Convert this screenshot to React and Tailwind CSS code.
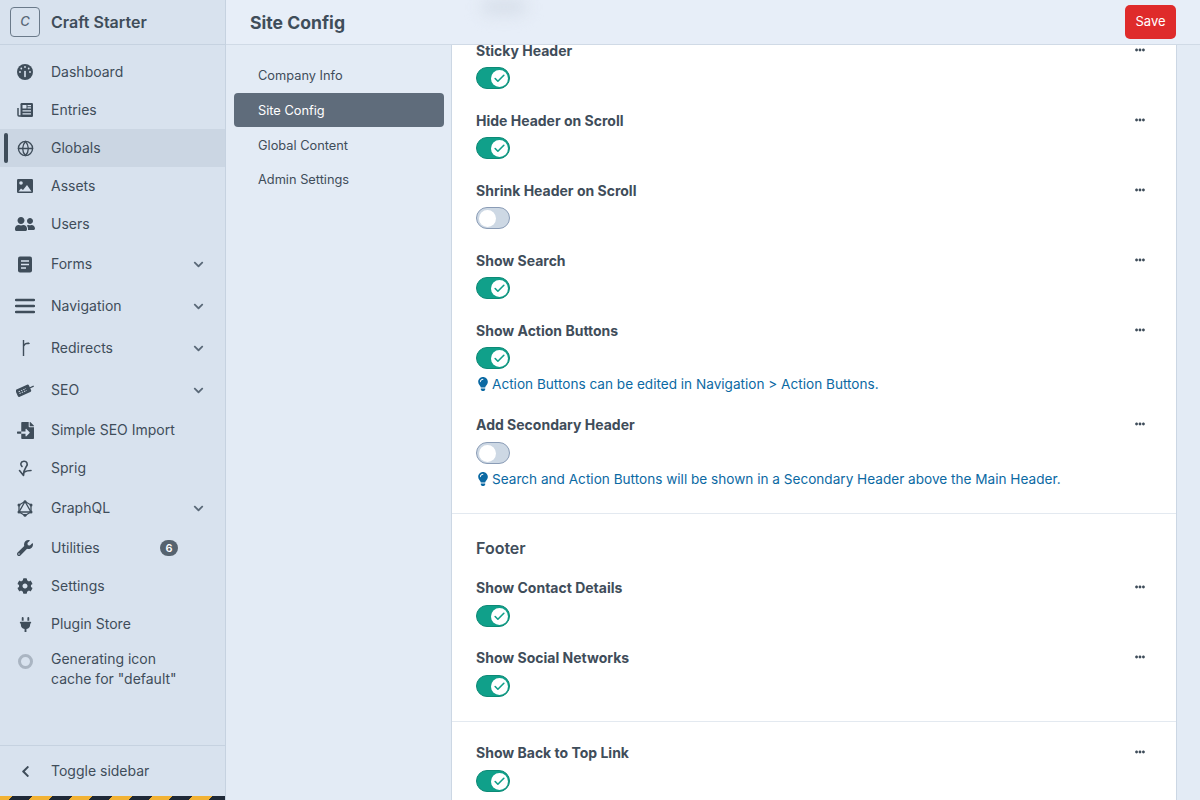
import React from 'react';
import {
  FaWrench,
  FaCog,
  FaPlug,
  FaFileImport,
  FaChevronDown,
  FaChevronLeft,
  FaLightbulb,
  FaEllipsisH,
  FaUserFriends,
} from 'react-icons/fa';
import { Globe, Check } from 'lucide-react';

const GaugeIcon = () => (
  <svg width="16" height="16" viewBox="0 0 16 16">
    <circle cx="8" cy="8" r="8" fill="currentColor" />
    <path d="M8 7.500v5" stroke="#d8e2ee" strokeWidth="1.600" strokeLinecap="round" />
    <circle cx="8" cy="3" r="0.900" fill="#d8e2ee" />
    <circle cx="4.300" cy="4.500" r="0.900" fill="#d8e2ee" />
    <circle cx="11.700" cy="4.500" r="0.900" fill="#d8e2ee" />
    <circle cx="3" cy="8" r="0.900" fill="#d8e2ee" />
    <circle cx="13" cy="8" r="0.900" fill="#d8e2ee" />
  </svg>
);

const NewsIcon = () => (
  <svg width="16" height="14" viewBox="0 0 16 14">
    <path d="M1 5v7a1 1 0 0 0 1 1h2" fill="none" stroke="currentColor" strokeWidth="1.500" />
    <rect x="3.500" y="0" width="12.500" height="14" rx="1.200" fill="currentColor" />
    <rect x="5.500" y="2" width="4" height="3.500" fill="#d8e2ee" />
    <path d="M10.500 2.700h3.500M10.500 4.800h3.500M5.500 7.800h8.500M5.500 10.800h8.500" stroke="#d8e2ee" strokeWidth="1.200" />
  </svg>
);

const ImageIcon = () => (
  <svg width="16" height="14" viewBox="0 0 16 14">
    <rect width="16" height="14" rx="1.200" fill="currentColor" />
    <circle cx="4" cy="4" r="1.800" fill="#d8e2ee" />
    <path d="M1.500 12.500 4 9.500l2 1.500L10 6l4.500 6.500z" fill="#d8e2ee" />
  </svg>
);

const FormsIcon = () => (
  <svg width="16" height="17" viewBox="0 0 16 17">
    <rect x="1" y="0.500" width="14" height="16" rx="2" fill="currentColor" />
    <path d="M4 5h8M4 8.500h8M4 12h5" stroke="#d8e2ee" strokeWidth="1.600" />
  </svg>
);

const NavIcon = () => (
  <svg width="20" height="16" viewBox="0 0 20 16">
    <path d="M1 2h18M1 8h18M1 14h18" stroke="currentColor" strokeWidth="2.400" strokeLinecap="round" />
  </svg>
);

const RedirectIcon = () => (
  <svg width="16" height="16" viewBox="0 0 16 16" fill="none">
    <path d="M6.500 0v16" stroke="currentColor" strokeWidth="1.400" />
    <path d="M6.500 6 C7.500 4 9 3.300 11 3.300" stroke="currentColor" strokeWidth="1.400" />
    <path d="M11.500 2l-1 2.500 2.500-.8z" fill="currentColor" />
  </svg>
);

const TagIcon = () => (
  <svg width="18" height="14" viewBox="0 0 18 14">
    <g transform="rotate(-24 9 7)">
      <rect x="0" y="3" width="14.500" height="8" rx="1.500" fill="currentColor" />
      <path d="M14 7h4.500" stroke="currentColor" strokeWidth="1.200" />
      <path d="M2.500 6h8M2.500 8h8" stroke="#d8e2ee" strokeWidth="0.900" strokeDasharray="1.500 1" />
    </g>
  </svg>
);

const SprigIcon = () => (
  <svg width="16" height="17" viewBox="0 0 16 17" fill="none">
    <path
      d="M5 6.500 C3 5 3.500 1.500 6.800 1.300 C10 1.100 11 4 9.500 6.200 C8.300 8 6.500 10 6.500 15.500 M2.500 10.500 L6.500 15.500 M7.300 12 C9 11 11.500 10.500 14 10.500"
      stroke="currentColor"
      strokeWidth="1.600"
      strokeLinecap="round"
    />
  </svg>
);

const GraphqlIcon = () => (
  <svg width="16" height="17" viewBox="0 0 16 17" fill="none" stroke="currentColor" strokeWidth="1.300">
    <path d="M8 1.500 14 5v7l-6 3.500L2 12V5z" />
    <path d="M8 1.500 14 12H2z" />
    <g fill="currentColor" stroke="none">
      <circle cx="8" cy="1.800" r="1.500" />
      <circle cx="14" cy="5" r="1.500" />
      <circle cx="14" cy="12" r="1.500" />
      <circle cx="8" cy="15.200" r="1.500" />
      <circle cx="2" cy="12" r="1.500" />
      <circle cx="2" cy="5" r="1.500" />
    </g>
  </svg>
);

const navItems = [
  { label: 'Dashboard', icon: <GaugeIcon /> },
  { label: 'Entries', icon: <NewsIcon /> },
  { label: 'Globals', icon: <Globe size={17} strokeWidth={1.900} />, active: true },
  { label: 'Assets', icon: <ImageIcon /> },
  { label: 'Users', icon: <FaUserFriends size={20} /> },
  { label: 'Forms', icon: <FormsIcon />, sub: true },
  { label: 'Navigation', icon: <NavIcon />, sub: true },
  { label: 'Redirects', icon: <RedirectIcon />, sub: true },
  { label: 'SEO', icon: <TagIcon />, sub: true },
  { label: 'Simple SEO Import', icon: <FaFileImport size={17} /> },
  { label: 'Sprig', icon: <SprigIcon /> },
  { label: 'GraphQL', icon: <GraphqlIcon />, sub: true },
  { label: 'Utilities', icon: <FaWrench size={16} />, badge: 6 },
  { label: 'Settings', icon: <FaCog size={16} /> },
  { label: 'Plugin Store', icon: <FaPlug size={15} /> },
];

const Sidebar = () => (
  <aside className="w-[226px] h-full shrink-0 flex flex-col bg-[#d8e2ee] border-r border-[#c6d2e0] text-[#3f4d5a]">
    <div className="h-[45px] shrink-0 flex items-center pl-[10px] border-b border-[#c6d2e0]">
      <div className="w-[30px] h-[30px] flex items-center justify-center border border-[#6b7a8a] rounded text-[13px] font-medium italic text-[#5a6978]">
        C
      </div>
      <span className="ml-[11px] text-base font-semibold">Craft Starter</span>
    </div>
    <nav className="flex-1 pt-2">
      {navItems.map((item) => (
        <div
          key={item.label}
          className={`relative flex items-center ${item.sub ? 'h-[42px]' : 'h-[38px]'} ${item.active ? 'bg-[#cbd6e3]' : ''}`}
        >
          {item.active && <span className="absolute left-1 top-1 bottom-1 w-1 rounded bg-[#3f4d5a]" />}
          <span className="w-[50px] shrink-0 flex justify-center">{item.icon}</span>
          <span className="ml-[1px] text-sm">{item.label}</span>
          {item.sub && <FaChevronDown size={11} className="absolute left-[193px] text-[#5a6978]" />}
          {item.badge && (
            <span className="absolute left-[160px] w-[18px] h-4 flex items-center justify-center rounded-full bg-[#56636f] text-white text-[11px] font-semibold">
              {item.badge}
            </span>
          )}
        </div>
      ))}
      <div className="flex items-start pt-[6px]">
        <span className="w-[50px] shrink-0 flex justify-center pt-[5px]">
          <span className="w-[15px] h-[15px] rounded-full border-[3px] border-[#aab5c2]" />
        </span>
        <span className="ml-[1px] text-sm leading-5">
          Generating icon
          <br />
          cache for "default"
        </span>
      </div>
    </nav>
    <div className="h-[51px] shrink-0 flex items-center border-t border-[#c6d2e0]">
      <span className="w-[50px] shrink-0 flex justify-center">
        <FaChevronLeft size={13} />
      </span>
      <span className="ml-[1px] text-sm">Toggle sidebar</span>
    </div>
    <div className="h-1 shrink-0 bg-[repeating-linear-gradient(135deg,#f2b233_0,#f2b233_9px,#1f2937_9px,#1f2937_23px,#f2b233_23px,#f2b233_28.28px)]" />
  </aside>
);

const Toggle = ({ on, className = 'mt-[6px]' }) => (
  <div
    className={`${className} relative w-[34px] h-[22px] rounded-full border ${on ? 'bg-[#10a08a] border-[#0d8a76]' : 'bg-[#cdd8e4] border-[#8a9cb6]'}`}
  >
    <span
      className={`absolute top-[1.500px] w-[17px] h-[17px] rounded-full bg-white flex items-center justify-center ${on ? 'right-[1.500px]' : 'left-[1.500px]'}`}
    >
      {on && <Check size={13} strokeWidth={3} className="text-[#10a08a]" />}
    </span>
  </div>
);

const Field = ({ label, on, hint, className = 'mt-[22px]', toggleClass }) => (
  <div className={`${className} relative`}>
    <div className="h-5 flex items-center justify-between">
      <span className="text-sm font-bold text-[#3f4d5a]">{label}</span>
      <FaEllipsisH size={10} className="mr-[7px] -mt-[2px] text-[#3f4d5a]" />
    </div>
    <Toggle on={on} className={toggleClass} />
    {hint && (
      <div className="mt-[5px] h-5 flex items-center text-[13.6px] text-[#0b69a3]">
        <span className="w-4 shrink-0">
          <FaLightbulb size={14} />
        </span>
        {hint}
      </div>
    )}
  </div>
);

export default function App() {
  return (
    <div className="h-[800px] w-[1200px] flex overflow-hidden font-['Inter',sans-serif] bg-[#e3ebf5]">
      <Sidebar />
      <div className="flex-1 h-full flex flex-col min-w-0">
        <header className="relative z-10 h-[45px] shrink-0 flex items-center justify-between pl-6 pr-6 bg-[#e7eef8] border-b border-[#d0dae6]">
          <span className="absolute left-[255px] top-0 w-[46px] h-[14px] rounded-full bg-[#d5dde8] blur-sm" />
          <h1 className="relative pt-[2px] text-[17.600px] font-bold text-[#3f4d5a]">Site Config</h1>
          <button className="relative h-[34px] w-[51px] rounded-[5px] bg-[#df2b2b] text-white text-[13px]">Save</button>
        </header>
        <div className="flex-1 flex min-h-0 overflow-hidden">
          <div className="w-[226px] shrink-0 pt-[13px] pl-2 pr-[7px] border-r border-[#ccd7e4] text-[12.800px] text-[#3f4d5a]">
            <div className="h-[35px] flex items-center px-6">Company Info</div>
            <div className="h-[34px] flex items-center px-6 pt-[1px] rounded bg-[#5f6c7b] text-white">Site Config</div>
            <div className="h-[35px] flex items-center px-6 pt-[2px]">Global Content</div>
            <div className="h-[34px] flex items-center px-6 pt-[1px]">Admin Settings</div>
          </div>
          <main className="w-[725px] shrink-0 bg-white border-r border-[#ccd7e4] -mt-[4px]">
            <div className="px-6 border-b border-[#e3e9f0] pb-6">
              <Field label="Sticky Header" on className="mt-0" />
              <Field label="Hide Header on Scroll" on />
              <Field label="Shrink Header on Scroll" />
              <Field label="Show Search" on />
              <Field label="Show Action Buttons" on hint="Action Buttons can be edited in Navigation > Action Buttons." />
              <Field
                label="Add Secondary Header"
                className="mt-[21px]"
                toggleClass="mt-[7px]"
                hint="Search and Action Buttons will be shown in a Secondary Header above the Main Header."
              />
            </div>
            <div className="px-6 pt-[22px] pb-6 border-b border-[#e3e9f0]">
              <h2 className="h-6 flex items-center text-base font-semibold text-[#3f4d5a]">Footer</h2>
              <Field label="Show Contact Details" on className="mt-[18px]" toggleClass="mt-[7px]" />
              <Field label="Show Social Networks" on className="mt-[21px]" toggleClass="mt-[7px]" />
            </div>
            <div className="px-6 pt-[21px]">
              <Field label="Show Back to Top Link" on className="mt-0" toggleClass="mt-[7px]" />
            </div>
          </main>
        </div>
      </div>
    </div>
  );
}
